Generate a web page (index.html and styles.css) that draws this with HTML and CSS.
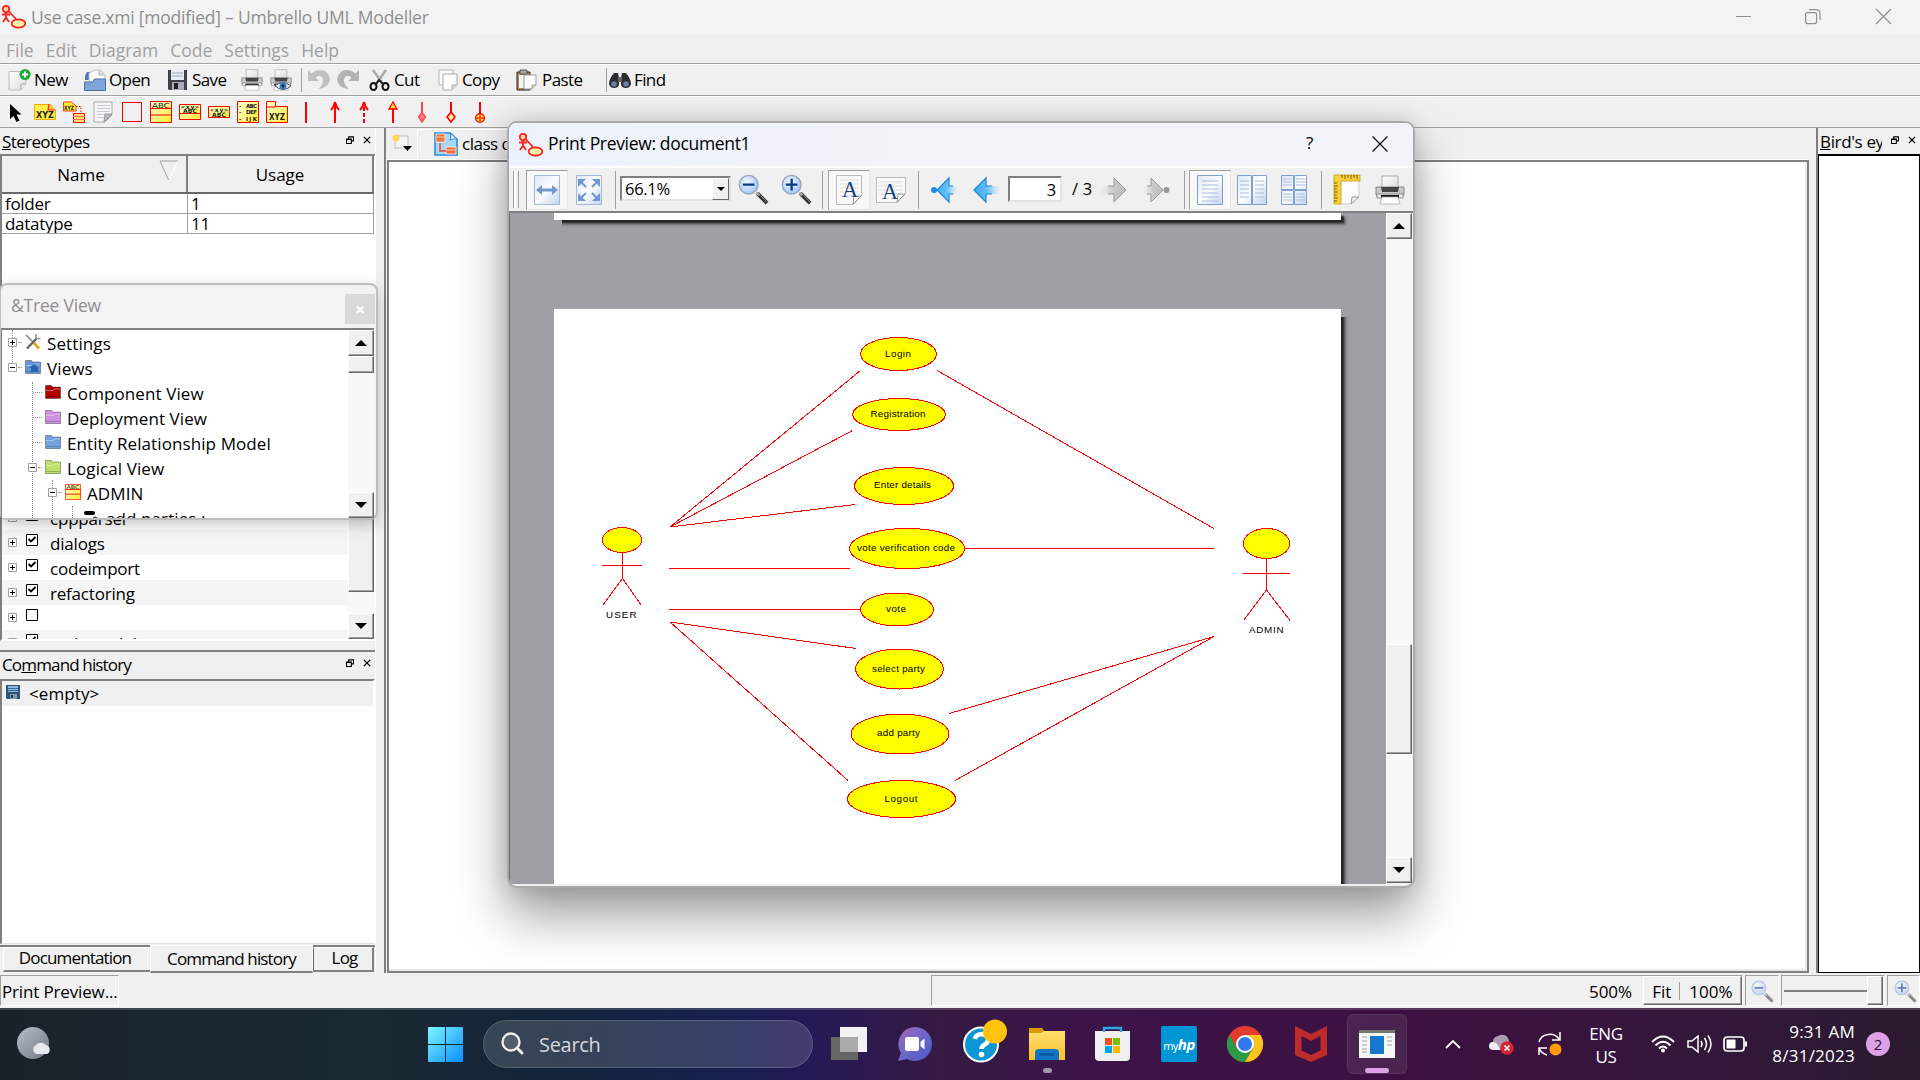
FILE: index.html
```html
<!DOCTYPE html>
<html lang="en">
<head>
<meta charset="utf-8">
<title>Umbrello UML Modeller</title>
<link rel="stylesheet" href="styles.css">
</head>
<body>
<svg class="defs" width="0" height="0">
  <defs>
    <linearGradient id="gYellow" x1="0" y1="0" x2="1" y2="1"><stop offset="0" stop-color="#ffffd0"/><stop offset=".5" stop-color="#fdf68a"/><stop offset="1" stop-color="#ffee20"/></linearGradient>
    <linearGradient id="gPage" x1="0" y1="0" x2="1" y2="1"><stop offset="0" stop-color="#fff"/><stop offset="1" stop-color="#dcdcdc"/></linearGradient>
    <linearGradient id="gBluePage" x1="0" y1="0" x2="1" y2="1"><stop offset="0" stop-color="#dfe6f2"/><stop offset=".5" stop-color="#fbfcfe"/><stop offset="1" stop-color="#c4d2ea"/></linearGradient>
    <linearGradient id="gArrow" x1="0" y1="0" x2="1" y2="0"><stop offset="0" stop-color="#39acf5"/><stop offset=".5" stop-color="#62bff9"/><stop offset="1" stop-color="#8fd2fb" stop-opacity="0"/></linearGradient>
    <linearGradient id="gArrowOff" x1="1" y1="0" x2="0" y2="0"><stop offset="0" stop-color="#bdbdbd"/><stop offset=".5" stop-color="#c9c9c9"/><stop offset="1" stop-color="#ddd" stop-opacity="0"/></linearGradient>
    <linearGradient id="gWin" x1="0" y1="0" x2="1" y2="1"><stop offset="0" stop-color="#7df6ff"/><stop offset="1" stop-color="#0a8cff"/></linearGradient>
    <linearGradient id="gChat" x1="0" y1="0" x2="1" y2="1"><stop offset="0" stop-color="#a666b0"/><stop offset=".5" stop-color="#6c68cc"/><stop offset="1" stop-color="#4d52c4"/></linearGradient>
    <linearGradient id="gFolder" x1="0" y1="0" x2="0" y2="1"><stop offset="0" stop-color="#ffe070"/><stop offset="1" stop-color="#fbc02a"/></linearGradient>
    <linearGradient id="gMoon" x1="0" y1="0" x2="1" y2="1"><stop offset="0" stop-color="#b4bfc9"/><stop offset="1" stop-color="#757a84"/></linearGradient>
    <radialGradient id="gLens" cx=".4" cy=".35" r=".7"><stop offset="0" stop-color="#f4f9ff"/><stop offset="1" stop-color="#9fc2f8"/></radialGradient>
    <symbol id="logo" viewBox="0 0 24 24">
      <g fill="none" stroke="#f7231f" stroke-width="1.8"><circle cx="4" cy="4" r="3.2" fill="#ffd9a0"/><path d="M4 7v6M0 9.500h8M4 12.500L1 17M4 12.500L7 17M6.500 6L14 14" /><ellipse cx="16.500" cy="18.500" rx="6.800" ry="4.200" fill="#fff3a8"/></g>
    </symbol>
    <symbol id="lens" viewBox="0 0 32 32">
      <path d="M20 20L30 30" stroke="#333" stroke-width="4"/><path d="M19 19L22 22" stroke="#aaa" stroke-width="2.500"/><path d="M23 22L30 29" stroke="#888" stroke-width="1"/>
      <circle cx="11" cy="11" r="9.600" fill="url(#gLens)" stroke="#9aa7bb" stroke-width="1.500"/><path d="M5 11h12" stroke="#0b3a80" stroke-width="2.400"/>
    </symbol>
    <symbol id="folder" viewBox="0 0 16 14">
      <path d="M.5 13.500V.5h6l1 1.500h8v11.500z" stroke="#0005" stroke-width="1"/><path d="M1 5.500h7l1-1.500h6" fill="none" stroke="#fff6"/><path d="M1 11.500h14" stroke="#0003"/>
    </symbol>
    <symbol id="float" viewBox="0 0 9 9"><path d="M3 3V.8h5.500V5.500H6.500M3 1.200h5.500M.6 8.400V3.500h5.400v4.900zM.6 4h5.400" fill="none" stroke="#000" stroke-width="1.200"/></symbol>
    <symbol id="cross" viewBox="0 0 9 9"><path d="M1 1l7 7M8 1L1 8" stroke="#000" stroke-width="1.500"/></symbol>
    <symbol id="plus" viewBox="0 0 9 9"><path d="M.5.5h8v8h-8z" fill="#fff" stroke="#a0a0a0"/><path d="M2 4.500h5M4.500 2v5" stroke="#000"/></symbol>
    <symbol id="minus" viewBox="0 0 9 9"><path d="M.5.5h8v8h-8z" fill="#fff" stroke="#a0a0a0"/><path d="M2 4.500h5" stroke="#000"/></symbol>
    <symbol id="checked" viewBox="0 0 12 12"><path d="M.5.5h11v11h-11z" fill="#fff" stroke="#000"/><path d="M2.500 5L5 7.500 9.500 3" fill="none" stroke="#000" stroke-width="1.800"/></symbol>
    <symbol id="unchecked" viewBox="0 0 12 12"><path d="M.5.5h11v11h-11z" fill="#fff" stroke="#000"/></symbol>
    <symbol id="classicon" viewBox="0 0 22 22"><path d="M.5.500h21v21h-21z" fill="url(#gYellow)" stroke="#f00"/><path d="M0 7.500h22M0 14h22" stroke="#f00" stroke-width="1.200"/><text x="2" y="6.500" font-size="7" textLength="18" lengthAdjust="spacingAndGlyphs" class="tiny">ABC</text></symbol>
    <symbol id="printer" viewBox="0 0 30 30"><path d="M7 1h16v12H7z" fill="url(#gPage)" stroke="#aaa"/><path d="M1 12h28v8H1z" fill="#c9c9c9" stroke="#888"/><path d="M6 12l1 5h16l1-5z" fill="#444"/><path d="M2 19h26v4H2z" fill="#eee" stroke="#777" stroke-width=".8"/><path d="M6 20h18v3H6z" fill="#111"/><path d="M7 22h16l2 7H5z" fill="#fff" stroke="#aaa" stroke-width=".8"/></symbol>
  </defs>
</svg>

<div class="app">
  <header class="titlebar">
    <svg class="logo"><use href="#logo"/></svg>
    <span class="title">Use case.xmi [modified] – Umbrello UML Modeller</span>
    <svg class="winbtns" width="156" height="20" viewBox="0 0 156 20" fill="none" stroke="#8f8f8f" stroke-width="1.200"><path d="M0 10.500h15M140 3l15 15M155 3l-15 15"/><rect x="69.600" y="6.600" width="11" height="11" rx="2"/><path d="M73 3.600h7.500a3.500 3.500 0 0 1 3.500 3.500V14"/></svg>
  </header>
  <nav class="menubar"><span>File</span><span>Edit</span><span>Diagram</span><span>Code</span><span>Settings</span><span>Help</span></nav>

  <div class="toolbar main-tools">
    <button class="tb new"><svg width="24" height="22"><path d="M1 2.500h17v12l-5 6.500H1z" fill="url(#gPage)" stroke="#bbb"/><path d="M13 21v-6h5" fill="#eee" stroke="#aaa"/><circle cx="17" cy="5.500" r="5.500" fill="#1faa35"/><path d="M17 2.500v6M14 5.500h6" stroke="#fff" stroke-width="2"/></svg>New</button>
    <button class="tb open"><svg width="22" height="22"><path d="M1 7l2-4h6v8H1z" fill="#4a78b8"/><path d="M5 13V4l6-3h5l5 5v8z" fill="#fafafa" stroke="#bbb"/><path d="M15 1v5h5" fill="#ddd" stroke="#bbb"/><path d="M.5 13h8l2-3h11v11.500H.5z" fill="#7da5d8" stroke="#4a75b0"/></svg>Open</button>
    <button class="tb save"><svg width="22" height="22"><path d="M1 1h19v20H2l-1-1z" fill="#3c4048"/><path d="M4 1h13v10H4z" fill="#e8eef8"/><path d="M5 4h11M5 7h11" stroke="#9ab"/><path d="M5 13h12v8H5z" fill="#aab"/><path d="M7 14h4v6H7z" fill="#222"/></svg>Save</button>
    <svg class="i-print" width="22" height="22"><use href="#printer"/></svg>
    <svg class="i-preview" width="22" height="22"><use href="#printer"/><path d="M5 17q7-7 16 0-8 7-16 0" fill="#e8eef5" stroke="#456"/><circle cx="13" cy="17" r="3.500" fill="#3a7cc4"/><circle cx="13" cy="17" r="1.400" fill="#123"/></svg>
    <i class="sep"></i>
    <svg class="i-undo" width="22" height="20" viewBox="0 0 22 20"><path d="M0 0v11h11L7.500 8q4-4.500 7 0 2 5-4 11Q21 18 22 9 20 0 12 0 7 0 3.500 3.500z" fill="#c0c0c0"/></svg>
    <svg class="i-redo" width="22" height="20" viewBox="0 0 22 20"><path d="M22 0v11H11l3.500-3q-4-4.500-7 0-2 5 4 11Q1 18 0 9 2 0 10 0q5 0 8.500 3.500z" fill="#b4b4b4"/></svg>
    <button class="tb cut"><svg width="21" height="22" fill="none"><path d="M4 1l10 14M17 1L7 15" stroke="#aaa" stroke-width="2.500"/><ellipse cx="4.500" cy="17.500" rx="3" ry="3.500" stroke="#111" stroke-width="2"/><ellipse cx="16.500" cy="17.500" rx="3" ry="3.500" stroke="#111" stroke-width="2"/><path d="M7 15l3-4 4 4" stroke="#222" stroke-width="2"/></svg>Cut</button>
    <button class="tb copy"><svg width="21" height="22"><path d="M1 1h14v15H1z" fill="#fafafa" stroke="#b5b5b5"/><path d="M5 5h14v11l-5 5H5z" fill="#fdfdfd" stroke="#aaa"/><path d="M14 21v-5h5" fill="#ddd" stroke="#aaa"/></svg>Copy</button>
    <button class="tb paste"><svg width="22" height="22"><path d="M1 3h13v18H1z" fill="#b58a55" stroke="#222"/><path d="M4 1h7v4H4z" fill="#aaa" stroke="#555"/><path d="M3 6h9v13H3z" fill="#f4f4f4"/><path d="M8 6h12v10l-4 4H8z" fill="#fdfdfd" stroke="#999"/><path d="M16 20v-4h4" fill="#ddd" stroke="#999"/></svg>Paste</button>
    <i class="sep"></i>
    <button class="tb find"><svg width="22" height="20"><path d="M5 3h4l1 5 0 7q-1 3-5 3t-5-4q0-5 5-11zM17 3h-4l-1 5v7q1 3 5 3t5-4q0-5-5-11z" fill="#2b2d33"/><path d="M9 7h4v5H9z" fill="#666"/><circle cx="5" cy="14" r="2.800" fill="#6b7fa5"/><circle cx="17" cy="14" r="2.800" fill="#6b7fa5"/></svg>Find</button>
  </div>

  <div class="toolbar shape-tools">
    <svg viewBox="0 0 22 22"><path d="M5 3v15l3.500-3 3 6 3-1.500-3-6h5z" fill="#000"/></svg>
    <svg viewBox="0 0 22 22"><path d="M.5 3.500h16L21.500 9v9.500H.5z" fill="#fff04a" stroke="#f7a800"/><path d="M15 3l-1 6h7" fill="#ffc93a" stroke="#f22" stroke-width="1.200"/><text x="2" y="17" font-size="9" font-weight="bold" textLength="18" lengthAdjust="spacingAndGlyphs" class="tiny">XYZ</text></svg>
    <svg viewBox="0 0 22 22"><path d="M.5 1h8L13 5v5H.5z" fill="#ffe83a" stroke="#f40"/><text x="1" y="8.500" font-size="6" font-weight="bold" class="tiny" textLength="10" lengthAdjust="spacingAndGlyphs">XYZ</text><path d="M13 5.500h5v7" fill="none" stroke="#f00" stroke-dasharray="1.500 1.500"/><path d="M10.500 12.500h11v9h-11z" fill="#ffe36a" stroke="#f00"/><path d="M10 15.500h12M10 18.500h12" stroke="#f66"/></svg>
    <svg viewBox="0 0 22 22"><path d="M2 1h18v13l-7 7H2z" fill="#f6f6f6" stroke="#aaa"/><path d="M5 4.500h13M5 7.500h13M5 10.500h13M5 13.500h9M5 16.500h7" stroke="#c3cbd6"/><path d="M12 21l1-8h7z" fill="#bbb" stroke="#999"/></svg>
    <svg viewBox="0 0 22 22"><path d="M1.500 1.500h19v19h-19z" fill="none" stroke="#f00"/></svg>
    <svg viewBox="0 0 22 22"><use href="#classicon"/></svg>
    <svg viewBox="0 0 22 22"><path d="M.5 3.500h21v15H.5zM0 12.500h22" fill="url(#gYellow)" stroke="#f00"/><text x="2" y="7.500" font-size="6" font-weight="bold" class="tiny" textLength="18">«xy»</text><text x="4" y="12" font-size="6" font-weight="bold" class="tiny" textLength="14">ABC</text></svg>
    <svg viewBox="0 0 22 22"><path d="M.5 5.500h21v11H.5z" fill="url(#gYellow)" stroke="#f00"/><text x="2" y="10.500" font-size="6" font-weight="bold" class="tiny" textLength="18">«xy»</text><text x="4" y="15.500" font-size="6" font-weight="bold" class="tiny" textLength="14">ABC</text></svg>
    <svg viewBox="0 0 22 22"><path d="M.5.500h21v21H.500z" fill="url(#gYellow)" stroke="#f00"/><g font-size="5.500" font-weight="bold"><text x="2" y="6.500" class="tiny">-</text><text x="9" y="6.500" class="tiny" textLength="11">ABC</text><text x="2" y="13" class="tiny">-</text><text x="9" y="13" class="tiny" textLength="11">DEF</text><text x="2" y="19.500" class="tiny">-</text><text x="9" y="19.500" class="tiny" textLength="11">IJK</text></g></svg>
    <svg viewBox="0 0 22 22"><path d="M.500.500h9v5h12v16H.500zM.5 6h9" fill="url(#gYellow)" stroke="#f00"/><text x="3" y="19" font-size="9" font-weight="bold" class="tiny" textLength="16" lengthAdjust="spacingAndGlyphs">XYZ</text></svg>
    <svg viewBox="0 0 22 22" class="line"><path d="M11 1v21"/></svg>
    <svg viewBox="0 0 22 22" class="line"><path d="M11 22V1M7 9q3-3 4-8 1 5 4 8"/></svg>
    <svg viewBox="0 0 22 22" class="line"><path d="M11 22V2" stroke-dasharray="4 2"/><path d="M7 9q3-3 4-8 1 5 4 8"/></svg>
    <svg viewBox="0 0 22 22" class="line"><path d="M11 22V7"/><path d="M7 8l4-7 4 7z" fill="#ffd83a" stroke-width="1.300"/></svg>
    <svg viewBox="0 0 22 22" class="line"><path d="M11 1v11" stroke="#f44"/><path d="M11 11l3.500 5-3.500 5-3.500-5z" fill="#f77" stroke="#f44" stroke-width="1.300"/></svg>
    <svg viewBox="0 0 22 22" class="line"><path d="M11 1v11"/><path d="M11 11l4 5-4 5-4-5z" fill="#ffe9a0" stroke-width="1.600"/></svg>
    <svg viewBox="0 0 22 22" class="line"><path d="M11 1v20"/><circle cx="11" cy="17" r="4.300" fill="#ffd83a" stroke-width="1.300"/><path d="M7 17h8M11 13v8" stroke-width="1"/></svg>
  </div>

  <main class="workspace">
    <aside class="left-dock">
      <div class="dock-head"><span class="w1"><u>S</u>tereotypes</span><svg class="dk"><use href="#float"/></svg><svg class="dk"><use href="#cross"/></svg></div>
      <div class="stereo">
        <div class="row head"><div>Name<svg class="sort" width="20" height="21"><path d="M19 1L10 20" stroke="#fff" fill="none"/><path d="M9.500 20L1 1h18" stroke="#a0a0a0" fill="none"/></svg></div><div>Usage</div></div>
        <div class="row"><div>folder</div><div>1</div></div>
        <div class="row"><div>datatype</div><div>11</div></div>
      </div>
      <div class="srclist">
        <div class="src-rows">
          <div class="src"><svg class="ex"><use href="#plus"/></svg><svg class="ck"><use href="#unchecked"/></svg><span>cppparser</span></div>
          <div class="src alt"><svg class="ex"><use href="#plus"/></svg><svg class="ck"><use href="#checked"/></svg><span>dialogs</span></div>
          <div class="src"><svg class="ex"><use href="#plus"/></svg><svg class="ck"><use href="#checked"/></svg><span>codeimport</span></div>
          <div class="src alt"><svg class="ex"><use href="#plus"/></svg><svg class="ck"><use href="#checked"/></svg><span>refactoring</span></div>
          <div class="src"><svg class="ex"><use href="#plus"/></svg><svg class="ck"><use href="#unchecked"/></svg></div>
          <div class="src alt"><svg class="ex"><use href="#plus"/></svg><svg class="ck"><use href="#checked"/></svg><span>codemodel</span></div>
        </div>
        <div class="scroll"><div class="thumb grow1"></div><div class="trough"></div><div class="sbtn"><i class="down"></i></div></div>
      </div>
      <div class="dock-head history"><span class="w2">Co<u>m</u>mand history</span><svg class="dk"><use href="#float"/></svg><svg class="dk"><use href="#cross"/></svg></div>
      <div class="hist-list"><div class="hist-row"><svg width="14" height="14"><path d="M0 0h14v14H1l-1-1z" fill="#2c5578"/><path d="M2 1h10v6H2z" fill="#8cbbe4"/><path d="M2 3.500h10M2 5.500h10" stroke="#3a6c98"/><path d="M4 9h7v5H4z" fill="#7d9ab0"/><path d="M5 10h2v3H5z" fill="#1f3c55"/></svg><span>&lt;empty&gt;</span></div></div>
      <div class="tabs"><span class="tab t-doc">Documentation</span><span class="tab t-cmd">Command history</span><span class="tab t-log">Log</span></div>
    </aside>

    <section class="center">
      <div class="tabbar">
        <svg width="22" height="20"><path d="M3 2h13v12H3z" fill="#f5f5f5" stroke="#bbb"/><circle cx="4" cy="4" r="3.500" fill="#f8d85a"/><path d="M11 12h9l-4.500 5z" fill="#000"/></svg>
        <div class="doc-tab"><svg width="24" height="24"><path d="M1 1h15l7 6v16H1z" fill="#a8d6f6" stroke="#2a8be0" stroke-width="1.600"/><path d="M2 2h9v8H2zM12 15h10v7H12z" fill="#f0733a" stroke="#fff" stroke-width=".7"/><path d="M6 11v8h6" fill="none" stroke="#e43" stroke-width="1.500"/><path d="M2 5h9M12 18h10" stroke="#fbc9a8"/><path d="M16 1q2 3 0 7 4-2 7-1z" fill="#fff" stroke="#2a8be0"/></svg>class diagram</div>
      </div>
      <div class="canvas"></div>
    </section>

    <aside class="right-dock">
      <div class="dock-head"><span class="bird"><u>B</u>ird's eye</span><svg class="dk"><use href="#float"/></svg><svg class="dk"><use href="#cross"/></svg></div>
      <div class="bird-view"></div>
    </aside>
  </main>

  <footer class="status">
    <div class="panel p-msg">Print Preview...</div>
    <div class="panel p-main"><span class="pct">500%</span><div class="fit"><span>Fit</span><i></i><span>100%</span></div></div>
    <div class="panel p-zoom"><svg class="faded" width="23" height="23" viewBox="0 0 32 32"><use href="#lens" width="32" height="32"/></svg></div>
    <div class="panel p-slider"><i class="rail"></i><i class="knob"></i></div>
    <div class="panel p-zoomin"><svg class="faded" width="23" height="23" viewBox="0 0 32 32"><use href="#lens" width="32" height="32"/><path d="M11 5v12" stroke="#0b3a80" stroke-width="2.400"/></svg></div>
  </footer>

  <section class="tree-win">
    <div class="tree-title"><span>&amp;Tree View</span><div class="tree-close">×</div></div>
    <div class="tree-body">
      <div class="tree">
        <i class="v v0"></i><i class="v v1"></i><i class="v v2"></i><i class="v v3"></i>
        <div class="node d0"><svg class="ex"><use href="#plus"/></svg><i class="h"></i><svg class="ic" viewBox="0 0 16 16"><path d="M8 8l6 6.500" stroke="#e3ad1f" stroke-width="3"/><path d="M1 1l8 8" stroke="#888" stroke-width="1.600"/><path d="M12 4L2 14.500" stroke="#666" stroke-width="2.400"/><path d="M11 0v4.500h4.500" fill="none" stroke="#999" stroke-width="1.600"/></svg><span>Settings</span></div>
        <div class="node d0"><svg class="ex"><use href="#minus"/></svg><i class="h"></i><svg class="ic" fill="#6398dc"><use href="#folder"/><path d="M4 9l5-4 5 4h-1v4H6V9z" fill="#2d62a8"/></svg><span>Views</span></div>
        <div class="node d1"><i class="h wide"></i><svg class="ic" fill="#b00000"><use href="#folder"/></svg><span>Component View</span></div>
        <div class="node d1"><i class="h wide"></i><svg class="ic" fill="#d092e0"><use href="#folder"/></svg><span>Deployment View</span></div>
        <div class="node d1"><i class="h wide"></i><svg class="ic" fill="#74a3e0"><use href="#folder"/></svg><span>Entity Relationship Model</span></div>
        <div class="node d1"><svg class="ex"><use href="#minus"/></svg><i class="h"></i><svg class="ic" fill="#bfe06a"><use href="#folder"/></svg><span>Logical View</span></div>
        <div class="node d2"><svg class="ex"><use href="#minus"/></svg><i class="h"></i><svg class="ic" viewBox="0 0 22 22"><use href="#classicon"/></svg><span>ADMIN</span></div>
        <div class="node d3"><svg class="ic" viewBox="0 0 16 16"><path d="M2 4h7" stroke="#000" stroke-width="4" stroke-linecap="round"/><circle cx="11" cy="10" r="2" fill="none" stroke="#000"/></svg><span>add parties :</span></div>
      </div>
      <div class="scroll"><div class="sbtn"><i class="up"></i></div><div class="thumb t16"></div><div class="trough"></div><div class="sbtn"><i class="down"></i></div></div>
    </div>
  </section>

  <section class="dialog">
    <div class="dlg-title">
      <svg class="logo"><use href="#logo"/></svg><span>Print Preview: document1</span>
      <b class="q">?</b><svg width="16" height="16"><path d="M.5.500l15 15M15.500.500l-15 15" stroke="#111" stroke-width="1.300"/></svg>
    </div>
    <div class="dlg-tools">
      <i class="grip"></i>
      <div class="tool on"><svg width="26" height="30"><path d="M.5.500h25v29H.500z" fill="url(#gBluePage)" stroke="#a3b9dc"/><path d="M6 15h14" stroke="#7297c8" stroke-width="3"/><path d="M2 15l6-5v10zM24 15l-6-5v10z" fill="#7297c8"/></svg></div>
      <div class="tool"><svg width="26" height="30"><path d="M.5.500h25v29H.500z" fill="url(#gBluePage)" stroke="#a3b9dc"/><g stroke="#7297c8" stroke-width="2"><path d="M5 7l5 5M21 7l-5 5M5 23l5-5M21 23l-5-5"/></g><path d="M2 4h8l-8 8zM24 4v8l-8-8zM2 26v-8l8 8zM24 26h-8l8-8z" fill="#7297c8"/></svg></div>
      <i class="sep"></i>
      <div class="combo"><span>66.1%</span><div><i class="down"></i></div></div>
      <svg class="z1" width="31" height="31"><use href="#lens"/></svg>
      <svg class="z2" width="31" height="31" viewBox="0 0 32 32"><use href="#lens" width="32" height="32"/><path d="M11 5v12" stroke="#0b3a80" stroke-width="2.400"/></svg>
      <i class="sep s2"></i>
      <div class="tool on"><svg width="26" height="30"><path d="M.5.500h25v20l-8 9H.500z" fill="#f8f8f8" stroke="#bbb"/><path d="M4 5h18M4 9h18M4 13h18M4 17h18M4 21h14" stroke="#ddd"/><path d="M17 29l1-8h7z" fill="#fff" stroke="#999"/><text x="6" y="22" font-size="24" textLength="16" lengthAdjust="spacingAndGlyphs" class="serif">A</text></svg></div>
      <div class="tool"><svg width="30" height="26"><path d="M.5.500h29v16l-8 9H.500z" fill="#f8f8f8" stroke="#bbb"/><path d="M3 5h24M3 9h24M3 13h24M3 17h22" stroke="#ddd"/><path d="M21 25l1-8h7z" fill="#fff" stroke="#999"/><text x="6" y="22" font-size="24" textLength="16" lengthAdjust="spacingAndGlyphs" class="serif">A</text></svg></div>
      <i class="sep s3"></i>
      <svg class="a1" width="28" height="28"><path d="M7 14L19 2v8h8v8h-8v8z" fill="url(#gArrow)"/><path d="M23 10h-4V2L7 14l12 12v-8h4" fill="none" stroke="#1d86d0" stroke-width="1.200"/><circle cx="4" cy="14" r="3" fill="#1f8ee0"/></svg>
      <svg class="a2" width="28" height="28"><path d="M1 14L13 2v8h14v8H13v8z" fill="url(#gArrow)"/><path d="M19 10h-6V2L1 14l12 12v-8h6" fill="none" stroke="#1d86d0" stroke-width="1.200"/></svg>
      <div class="pagenum">3</div><span class="total">/ 3</span>
      <svg class="a3" width="28" height="28"><path d="M27 14L15 2v8H1v8h14v8z" fill="url(#gArrowOff)"/><path d="M9 10h6V2l12 12-12 12v-8H9" fill="none" stroke="#9a9a9a"/></svg>
      <svg class="a4" width="28" height="28"><path d="M21 14L9 2v8H1v8h8v8z" fill="url(#gArrowOff)"/><path d="M5 10h4V2l12 12L9 26v-8H5" fill="none" stroke="#9a9a9a"/><circle cx="24.500" cy="14" r="3" fill="#999"/></svg>
      <i class="sep s4"></i>
      <div class="tool on"><svg width="26" height="30"><path d="M.5.500h25v29H.500z" fill="url(#gBluePage)" stroke="#7f9fd0"/><path d="M5 6h16M5 10h16M5 14h16M5 18h16M5 22h16M5 26h16" stroke="#a9bedf"/></svg></div>
      <div class="tool"><svg width="30" height="30"><path d="M.5.500h14v29H.500zM15.500.500h14v29h-14z" fill="url(#gBluePage)" stroke="#7f9fd0"/><path d="M3 6h9M3 10h9M3 14h9M3 18h9M3 22h9M18 6h9M18 10h9M18 14h9M18 18h9M18 22h9" stroke="#a9bedf"/></svg></div>
      <div class="tool"><svg width="26" height="30"><path d="M.5.500h12v14H.500zM13.500.500h12v14h-12zM.5 15.500h12v14H.500zM13.500 15.500h12v14h-12z" fill="url(#gBluePage)" stroke="#7f9fd0"/><path d="M2 4h9M2 7h9M2 10h9M15 4h9M15 7h9M15 10h9M2 19h9M2 22h9M2 25h9M15 19h9M15 22h9M15 25h9" stroke="#a9bedf"/></svg></div>
      <i class="sep s5"></i>
      <svg class="ru" width="26" height="30"><path d="M5 4h20v17l-8 8H5z" fill="#fcfcfa" stroke="#ccc"/><path d="M0 0h26v6H7v23H0z" fill="#f7d23c" stroke="#c79a10" stroke-width=".8"/><path d="M8 0v3M11 0v4M14 0v3M17 0v4M20 0v3M23 0v4M0 8h3M0 11h4M0 14h3M0 17h4M0 20h3M0 23h4M0 26h3" stroke="#6b4e00" stroke-width=".9"/><path d="M17 29l1-7h7z" fill="#eee" stroke="#999"/></svg>
      <svg class="pr" width="30" height="30"><use href="#printer"/></svg>
    </div>
    <div class="preview">
      <div class="paper-area">
        <div class="sheet prev"></div>
        <div class="sheet cur">
          <svg class="diagram" width="787" height="576" viewBox="554 309 787 576">
            <g class="ln" fill="none" stroke="#f00">
              <path d="M670 527L860.500 370.500M670 527L852.500 430.500M670 527L855 504.500M669 568.500H850M669 609.500H861M670 622L856 648.500M670 622L848 780.500M937 370.500L1214 528.500M965 548.500H1214M1214 636.500L949 713.500M1214 636.500L955 780.500"/>
              <path d="M622.500 552V579M602 565.500H642M622.500 578.500L602.500 605.500M622.500 578.500L641.500 605.500M1266.500 558V590M1243 573.500H1290M1266.500 590L1243.500 620.500M1266.500 590L1290 620.500"/>
            </g>
            <g class="ln" fill="#ff0" stroke="#f00">
              <ellipse cx="622" cy="540" rx="19.500" ry="12.500"/><ellipse cx="1266.500" cy="543.500" rx="23" ry="15"/>
              <ellipse cx="898.500" cy="354" rx="38" ry="16.500"/><ellipse cx="899" cy="414.500" rx="46.500" ry="16"/><ellipse cx="904" cy="486" rx="49.500" ry="18.500"/><ellipse cx="907" cy="548.500" rx="57.500" ry="20"/><ellipse cx="897" cy="609.500" rx="36.500" ry="16.500"/><ellipse cx="899.500" cy="669" rx="44" ry="20"/><ellipse cx="900" cy="734" rx="49" ry="20"/><ellipse cx="901.500" cy="799" rx="54" ry="18.500"/>
            </g>
            <g class="lbl">
              <text x="885" y="357" textLength="26">Login</text><text x="870.500" y="417" textLength="55">Registration</text><text x="874" y="488" textLength="57">Enter details</text><text x="857" y="551" textLength="98">vote verification code</text><text x="886" y="612" textLength="20">vote</text><text x="872" y="672" textLength="53">select party</text><text x="877" y="736" textLength="43">add party</text><text x="884.500" y="802" textLength="33">Logout</text><text x="606" y="618" textLength="30.500">USER</text><text x="1249" y="633" textLength="34.500">ADMIN</text>
            </g>
          </svg>
        </div>
      </div>
      <div class="scroll wide26"><div class="sbtn"><i class="up"></i></div><div class="trough t405"></div><div class="thumb t109"></div><div class="trough"></div><div class="sbtn"><i class="down"></i></div></div>
    </div>
  </section>
</div>

<div class="taskbar">
  <svg class="weather" width="36" height="36"><circle cx="16" cy="17" r="16" fill="url(#gMoon)"/><path d="M19 28a5 5 0 0 1 0-9 6.500 6.500 0 0 1 10 0 4.800 4.800 0 0 1 1 9z" fill="#e6e9ee"/></svg>
  <svg class="start" width="35" height="35" viewBox="0 0 35 35"><path d="M0 1q0-1 1-1h16v17H0zM18 0h16q1 0 1 1v16H18zM0 18h17v17H1q-1 0-1-1zM18 18h17v16q0 1-1 1H18z" fill="url(#gWin)"/></svg>
  <div class="search"><svg width="24" height="24"><circle cx="10" cy="10" r="8.500" fill="#fff2" stroke="#eee" stroke-width="2.400"/><path d="M16 16l5 5" stroke="#eee" stroke-width="3" stroke-linecap="round"/></svg><span>Search</span></div>
  <div class="apps">
    <div class="app-ic"><svg width="36" height="34"><path d="M0 10h27v23H0z" fill="#666"/><path d="M9 0h27v25H9z" fill="#f2f2f2"/><path d="M9 10h18v15H9z" fill="#aaa"/></svg></div>
    <div class="app-ic"><svg width="36" height="36"><path d="M18 1a17 17 0 1 1-8 32L1 35l3-8A17 17 0 0 1 18 1z" fill="url(#gChat)"/><rect x="8" y="11" width="14" height="14" rx="2" fill="#fff"/><path d="M23.500 16l4-3.500v11l-4-3.500z" fill="#fff"/></svg></div>
    <div class="app-ic"><svg width="46" height="46" viewBox="0 0 46 46"><circle cx="23" cy="25.500" r="17" fill="#0c96d6" stroke="#fff" stroke-width="2"/><path d="M17 20q1-5 7-5 6 1 6 6 0 3-4 5-2.500 1.500-2.500 4" fill="none" stroke="#fff" stroke-width="4.500"/><circle cx="23.500" cy="35.500" r="2.800" fill="#fff"/><circle cx="37" cy="12.500" r="12" fill="#ffc20e"/></svg></div>
    <div class="app-ic run"><svg width="36" height="34"><path d="M0 1h13l3 4-3 4H0z" fill="#dc9a00"/><path d="M0 6h12l3-2h21v29H0z" fill="url(#gFolder)"/><path d="M6 33v-7q0-4 4-4h16q4 0 4 4v7z" fill="#1173c8"/><path d="M10 27.500h15" stroke="#0a4f92" stroke-width="2"/></svg></div>
    <div class="app-ic"><svg width="36" height="36"><path d="M0 5h35v26q0 4-4 4H4q-4 0-4-4z" fill="#f0f0f0"/><path d="M9 6V2h17v4" fill="none" stroke="#28a8ea" stroke-width="2.400"/><path d="M10 12h7v7h-7z" fill="#f25022"/><path d="M18 12h7v7h-7z" fill="#7fba00"/><path d="M10 20h7v7h-7z" fill="#00a4ef"/><path d="M18 20h7v7h-7z" fill="#ffb900"/></svg></div>
    <div class="app-ic"><div class="hp">my<b>hp</b></div></div>
    <div class="app-ic"><svg width="36" height="36" viewBox="0 0 36 36"><circle cx="18" cy="18" r="18" fill="#e33b2e"/><path d="M2.400 9A18 18 0 0 0 18 36l8-13.500H10z" fill="#2a9b48"/><path d="M18 36A18 18 0 0 0 33.600 9H18l8 13.500z" fill="#fcc41f"/><circle cx="18" cy="18" r="9" fill="#fff"/><circle cx="18" cy="18" r="7" fill="#2f78ee"/></svg></div>
    <div class="app-ic"><svg width="32" height="36"><path d="M0 0l16 8L32 0v29l-16 7-16-7zM6.500 10v14.500L16 29l9.500-4.500V10L16 15z" fill="#bd2b2b" fill-rule="evenodd"/></svg></div>
    <div class="app-ic active"><svg width="36" height="28"><path d="M0 0h36v28H0z" fill="#f6f6f6"/><path d="M0 0h36v3H0z" fill="#77736f"/><path d="M11 6h14v18H11z" fill="#1279cf"/><path d="M3 7h5M3 11h5M3 15h5M3 19h5M28 7h5M28 11h5M28 15h5M3 22h5" stroke="#ccc" stroke-width="2"/></svg></div>
  </div>
  <div class="tray">
    <svg class="t-up" width="16" height="10"><path d="M1 9l7-7 7 7" fill="none" stroke="#fff" stroke-width="1.800"/></svg>
    <svg class="t-cloud" width="26" height="22"><path d="M4 17a4.500 4.500 0 0 1 0-8 6 6 0 0 1 5-6 7 7 0 0 1 11 5v9z" fill="#a99bb0"/><path d="M4 17a4 4 0 0 1 0-8q5 0 7 8z" fill="#f0edf2"/><circle cx="18" cy="15" r="6.700" fill="#d9232e"/><path d="M15.500 12.500l5 5M20.500 12.500l-5 5" stroke="#fff" stroke-width="1.600"/></svg>
    <svg class="t-sync" width="26" height="26" fill="none" stroke="#fff" stroke-width="1.500"><path d="M2 11A11 10 0 0 1 22 8M23 1v8h-8M10 24Q4 22 2 17M2 24v-7h8"/><circle cx="18.500" cy="18.500" r="6" fill="#ff9a0a" stroke="none"/></svg>
    <div class="lang">ENG<br>US</div>
    <svg class="t-wifi" width="24" height="18" fill="none" stroke="#fff" stroke-width="1.800"><path d="M1 7q11-11 22 0M4.500 10.500q7.500-7.500 15 0M8 13.500q4-4 8 0"/><circle cx="12" cy="15.500" r="2" fill="#fff" stroke="none"/></svg>
    <svg class="t-vol" width="26" height="20" fill="none" stroke="#fff" stroke-width="1.500"><path d="M1 7h4l6-5v16l-6-5H1zM14 7q2 3 0 6M17.500 4q4 6 0 12M21 1.500q6 8.500 0 17"/></svg>
    <svg class="t-bat" width="25" height="16"><rect x="1" y="1" width="20" height="14" rx="3" fill="none" stroke="#fff" stroke-width="1.700"/><path d="M3.500 3.500h9v9h-9zM22 5.500h2v5h-2z" fill="#fff"/></svg>
    <div class="clock">9:31 AM<br>8/31/2023</div>
    <div class="badge">2</div>
  </div>
</div>
</body>
</html>
```
FILE: styles.css
```css
* { box-sizing: border-box; }
html, body { margin: 0; width: 1920px; height: 1080px; overflow: hidden; }
body { font: 17px/20px "Open Sans", "Noto Sans", sans-serif; color: #000; background: #f0f0f0; letter-spacing: -0.3px; white-space: nowrap; display: flex; flex-direction: column; }
svg { display: block; flex: none; overflow: visible; }
.defs { position: absolute; }
.tiny { fill: #222; stroke: none; font-family: "DejaVu Sans", sans-serif; letter-spacing: 0; }
.serif { fill: #17427f; font-family: "Liberation Serif", serif; letter-spacing: 0; }
.app { position: relative; height: 1008px; display: flex; flex-direction: column; background: #f0f0f0; }
.logo { width: 24px; height: 24px; }

.titlebar { height: 34px; flex: none; background: #f3f3f3; display: flex; align-items: center; padding-left: 2px; color: #8f8f8f; }
.title { margin: -1px 0 0 5px; font-size: 17.500px; letter-spacing: -0.22px; }
.titlebar .winbtns { margin: -3px 28px 0 auto; }
.menubar { height: 30px; flex: none; display: flex; gap: 12px; padding: 6px 0 0 6px; color: #a0a0a0; border-bottom: 1px solid #a0a0a0; font-size: 17.500px; letter-spacing: 0; }
.toolbar { height: 32px; flex: none; border-top: 1px solid #fff; border-bottom: 1px solid #a0a0a0; display: flex; align-items: center; }
.tb { font: inherit; letter-spacing: inherit; color: #000; border: 0; background: none; padding: 0; display: flex; align-items: center; gap: 3px; position: static; }
.main-tools { font-size: 17px; padding-left: 8px; letter-spacing: -0.6px; }
.tb.new { width: 76px; gap: 2px; } .tb.open { width: 83px; } .tb.save { width: 74px; }
.i-preview { margin-left: 7px; }
.main-tools .sep { width: 2px; height: 24px; border-left: 1px solid #a0a0a0; margin-left: 9px; flex: none; }
.i-undo { margin-left: 5px; } .i-redo { margin-left: 7px; }
.tb.cut { margin-left: 10px; width: 69px; gap: 4px; } .tb.copy { width: 78px; } .tb.paste { width: 82px; gap: 4px; }
.main-tools .sep ~ .sep { margin-left: 8px; }
.tb.find { margin-left: 1px; }
.shape-tools { padding-left: 5px; gap: 7px; }
.shape-tools svg { width: 22px; height: 22px; }
.shape-tools .line { fill: none; stroke: #f00; stroke-width: 2; }

.workspace { height: 845px; flex: none; display: flex; }
.left-dock { width: 376px; border-right: 1px solid #fff; flex: none; display: flex; flex-direction: column; }
.dock-head { height: 26px; flex: none; display: flex; align-items: center; padding: 2px 4px 0 2px; }
.dock-head span { margin-right: auto; }
.w1 { letter-spacing: -0.62px; } .w2 { letter-spacing: -0.85px; }
.dk { width: 8px; height: 8px; margin: -4px 0 0 9px; }
.stereo { height: 150px; flex: none; background: #fff; border-top: 2px solid #808080; border-left: 2px solid #808080; }
.row { display: grid; grid-template-columns: 186px 186px; height: 20px; border-bottom: 1px solid #a0a0a0; line-height: 20px; width: 372px; }
.row > div { padding-left: 3px; border-right: 1px solid #a0a0a0; overflow: hidden; }
.row.head { height: 38px; background: #f0f0f0; border-bottom: 2px solid #696969; line-height: 38px; letter-spacing: 0; }
.row.head > div { display: flex; justify-content: center; align-items: center; border-right: 2px solid #808080; padding: 2px 0 0; }
.row.head > div:first-child { gap: 54px; padding-left: 48px; }
.sort { margin-top: -10px; }
.srclist { height: 337px; flex: none; display: flex; background: #fff; border: 2px solid #fff; border-right-width: 1px; border-left-color: #808080; align-items: stretch; }
.src-rows { flex: 1; padding-top: 199px; overflow: hidden; }
.src { height: 25px; display: flex; align-items: center; padding-left: 6px; letter-spacing: -0.2px; }
.src.alt { background: #f5f5f5; }
.src span { margin: 2px 0 0 12px; }
.ex { width: 9px; height: 9px; }
.ck { width: 12px; height: 12px; margin: -5px 0 0 9px; }
.scroll { width: 26px; flex: none; display: flex; flex-direction: column; }
.thumb, .sbtn { background: #f0f0f0; border: 1px solid; border-color: #fff #696969 #696969 #fff; box-shadow: inset -1px -1px #a0a0a0; flex: none; }
.sbtn { height: 26px; display: flex; align-items: center; justify-content: center; }
.up, .down { width: 0; height: 0; border: 6px solid transparent; border-top-width: 0; border-bottom: 6px solid #000; }
.down { border-bottom: 0; border-top: 6px solid #000; }
.trough { flex: 1; background: #f8f8f8; }
.grow1 { height: 286px; } .t16 { height: 17px; } .t109 { height: 110px; } .t405 { flex: 0 0 405px; }
.history { margin-top: 9px; height: 29px; border-top: 2px solid #808080; padding-top: 0; padding-bottom: 1px; }
.hist-list { height: 265px; flex: none; background: #fff; border: 2px solid #808080; border-right-color: #fff; border-bottom: 1px solid #e0e0e0; }
.hist-row { height: 25px; background: #f0f0f0; display: flex; align-items: center; padding-left: 4px; gap: 9px; letter-spacing: .1px; }
.hist-row svg { margin-top: -3px; }
.hist-row span { margin-top: 1px; }
.tabs { display: flex; margin-top: 1px; border-top: 2px solid #808080; height: 28px; }
.tab { text-align: center; letter-spacing: -0.85px; height: 25px; border: 1px solid #fff; border-bottom: 2px solid #808080; line-height: 20px; }
.t-doc { width: 147px; margin-left: 3px; border-right: 0; padding-right: 4px; }
.t-cmd { width: 163px; height: 28px; margin-top: -2px; line-height: 26px; background: #f0f0f0; }
.t-log { width: 61px; border-right: 2px solid #808080; border-left: 1px solid #696969; padding-left: 3px; }

.center { margin-left: 8px; width: 1425px; flex: none; border-left: 2px solid #808080; display: flex; flex-direction: column; }
.tabbar { height: 32px; flex: none; display: flex; padding: 6px 0 0 6px; border-bottom: 1px solid #fff; }
.doc-tab { display: flex; align-items: center; gap: 4px; border-left: 1px solid #fff; padding: 0 0 2px 16px; margin: -5px 0 0 3px; letter-spacing: -0.5px; border-top: 1px solid #fff; }
.canvas { height: 813px; margin-left: 1px; background: #fff; border: 2px solid #808080; box-shadow: inset -2px -2px #e8e8e8; }
.right-dock { margin-left: 7px; width: 104px; border-left: 2px solid #808080; }
.bird { width: 64px; overflow: hidden; letter-spacing: -0.35px; }
.bird-view { height: 819px; background: #fff; border: 1px solid #000; border-top: 2px solid #000; }

.status { height: 35px; display: flex; padding: 2px 0 2px; }
.panel { border: 1px solid; border-color: #a0a0a0 #fff #fff #a0a0a0; display: flex; align-items: center; }
.p-msg { width: 119px; padding: 2px 0 0 1px; letter-spacing: -0.15px; }
.p-main { margin-left: 812px; width: 813px; justify-content: flex-end; letter-spacing: 0; }
.pct { margin: 2px 11px 0 0; }
.fit { display: flex; align-items: center; width: 99px; height: 29px; padding-left: 8px; border: 1px solid; border-color: #fff #696969 #696969 #fff; box-shadow: inset -1px -1px #a0a0a0; }
.fit span { margin-top: 2px; }
.fit i { width: 1px; height: 18px; background: #a0a0a0; margin: 0 9px 0 8px; }
.p-zoom { margin-left: 2px; width: 34px; justify-content: center; }
.faded { opacity: .6; margin-top: 1px; }
.p-slider { margin-left: 2px; width: 104px; padding-left: 2px; }
.rail { width: 83px; height: 2px; background: #808080; }
.knob { width: 16px; height: 29px; border: 1px solid; border-color: #fff #696969 #696969 #fff; box-shadow: inset -1px -1px #a0a0a0; }
.p-zoomin { margin-left: 2px; width: 33px; padding-left: 6px; }

.tree-win { position: absolute; left: -1px; top: 283px; width: 379px; height: 237px; background: #f3f3f3; border: 2px solid #bdbdbd; border-radius: 8px; box-shadow: 0 5px 14px rgba(0,0,0,.22); display: flex; flex-direction: column; }
.tree-title { height: 43px; flex: none; display: flex; padding: 9px 1px 0 10px; color: #8f8f8f; justify-content: space-between; font-size: 17.500px; line-height: 22px; letter-spacing: -0.2px; }
.tree-close { width: 30px; height: 30px; background: #d9d9d9; color: #fff; text-align: center; line-height: 30px; font-size: 18px; font-weight: bold; }
.tree-body { display: flex; height: 190px; border-top: 2px solid #808080; border-left: 1px solid #808080; margin: 0 2px 0 0; background: #fff; }
.tree { flex: 1; position: relative; overflow: hidden; }
.v { position: absolute; width: 1px; border-left: 1px dotted #909090; }
.v0 { left: 10px; top: 0; height: 38px; } .v1 { left: 30px; top: 52px; bottom: 0; } .v2 { left: 50px; top: 150px; bottom: 0; } .v3 { left: 70px; top: 176px; bottom: 0; }
.node { height: 25px; display: flex; align-items: center; position: relative; }
.node span { margin: 2px 0 0 6px; letter-spacing: 0.1px; }
.node .ex { margin-right: 1px; }
.d0 { padding-left: 6px; } .d1 { padding-left: 26px; } .d2 { padding-left: 46px; } .d3 { padding-left: 82px; }
.h { width: 4px; border-top: 1px dotted #909090; margin-right: 3px; }
.h.wide { width: 9px; margin: 0 3px 0 5px; }
.ic { width: 16px; height: 16px; margin-top: -1px; }

.dialog { position: absolute; left: 507px; top: 121px; width: 908px; height: 767px; border: 2px solid #aaa; border-radius: 10px; background: #f0f0f0; box-shadow: 0 28px 50px rgba(0,0,0,.38), 0 0 22px rgba(0,0,0,.14); display: flex; flex-direction: column; overflow: hidden; }
.dlg-title { height: 43px; flex: none; background: linear-gradient(90deg, #ecf2fb, #f2f3f8 50%); display: flex; align-items: center; padding-left: 10px; }
.dlg-title span { margin: -3px 0 0 5px; font-size: 17.500px; letter-spacing: -0.33px; }
.q { margin: -4px 59px 0 auto; font-weight: normal; }
.dlg-title svg:last-child { margin: -1px 25px 0 0; }
.dlg-tools { height: 47px; flex: none; border-top: 2px solid #fff; border-bottom: 2px solid #808080; display: flex; align-items: center; padding-left: 4px; }
.grip { width: 6px; height: 37px; border: solid #a0a0a0; border-width: 0 1px; box-shadow: inset 2px 0 #fff; }
.tool { width: 42px; height: 40px; display: flex; align-items: center; justify-content: center; flex: none; }
.tool.on { background: #f8f8f8; border: 1px solid; border-color: #a0a0a0 #e6e6e6 #e6e6e6 #a0a0a0; }
.grip + .tool { margin-left: 7px; }
.dlg-tools .sep { width: 1px; height: 38px; background: #a0a0a0; margin-left: 5px; flex: none; }
.combo { margin: -2px 0 0 4px; width: 111px; height: 25px; background: #fff; border: 2px solid #808080; border-color: #808080 #e3e3e3 #e3e3e3 #808080; display: flex; padding-left: 3px; justify-content: space-between; line-height: 22px; letter-spacing: -0.3px; font-size: 16.500px; }
.combo div { width: 17px; height: 22px; background: #f0f0f0; display: flex; align-items: center; justify-content: center; border: 1px solid; border-color: #fff #696969 #696969 #fff; }
.combo .down { border-width: 4px 4px 0; }
.z1 { margin-left: 7px; } .z2 { margin-left: 12px; }
.dlg-tools .s2 { margin: 0 5px 0 10px; }
.dlg-tools .s3 { margin-left: 6px; }
.a1 { margin-left: 11px; } .a2 { margin-left: 15px; }
.pagenum { width: 54px; height: 26px; margin: -2px 0 0 7px; background: #fff; border: 2px solid; border-color: #808080 #e3e3e3 #e3e3e3 #808080; text-align: right; padding-right: 4px; line-height: 23px; font-size: 16.500px; }
.total { margin: -1px 0 0 10px; width: 21px; font-size: 16.500px; letter-spacing: .2px; }
.a3 { margin-left: 6px; } .a4 { margin-left: 15px; }
.dlg-tools .s4 { margin: 0 4px 0 14px; }
.dlg-tools .s5 { margin-left: 6px; }
.ru { margin-left: 12px; } .pr { margin-left: 15px; }
.preview { display: flex; height: 671px; flex: none; border-left: 1px solid #696969; }
.paper-area { width: 876px; background: #a09fa4; overflow: hidden; padding-left: 44px; height: 671px; }
.sheet { width: 787px; background: #fff; }
.sheet.prev { height: 7px; box-shadow: 3px 3px 2px #222, 5px 5px 3px #4448; clip-path: polygon(0 0, 800px 0, 800px 20px, 8px 20px, 8px 7px, 0 7px); }
.sheet.cur { height: 640px; margin-top: 89px; box-shadow: 3px 2px 2px #222, 5px 4px 3px #4448; clip-path: polygon(0 0, 787px 0, 787px 8px, 800px 8px, 800px 700px, 0 700px); }
.ln { shape-rendering: crispEdges; }
.lbl { font: 9.800px "Liberation Sans", Arial, sans-serif; letter-spacing: 0; fill: #000; }
.wide26 { height: 670px; }

.taskbar { height: 72px; flex: none; border-top: 2px solid #ffffff2a; background: linear-gradient(90deg, #1b2129 0, #192a31 19%, #13233b 30%, #17204f 38%, #231a56 42%, #2f1a4c 46%, #351a42 49%, #3c1448 56%, #3c1142 72%, #3b123e 78%, #32183a 90%, #2a1a2e 100%); background-clip: border-box; background-origin: border-box; display: flex; align-items: center; color: #fff; }
.weather { margin: -2px 0 0 17px; }
.start { margin: -2px 0 0 375px; }
.search { margin: -2px 0 0 20px; width: 330px; height: 48px; border-radius: 24px; background: #ffffff26; border: 1px solid #ffffff26; display: flex; align-items: center; gap: 14px; padding-left: 17px; font-size: 20px; color: #d6d6de; }
.search span { margin-top: 1px; }
.apps { display: flex; margin-left: 3px; }
.app-ic { width: 66px; height: 60px; display: flex; align-items: center; justify-content: center; margin-top: -2px; position: relative; }
.app-ic:nth-child(3) svg { margin-top: -5px; }
.run::after { content: ""; position: absolute; left: 29px; bottom: 1px; width: 9px; height: 5px; border-radius: 3px; background: #a493ad; }
.active { width: 60px; margin-left: 3px; background: #ffffff14; border: 1px solid #ffffff14; border-radius: 6px; }
.active::after { content: ""; position: absolute; left: 17px; bottom: 0; width: 24px; height: 5px; border-radius: 3px; background: #dda0e4; }
.hp { width: 36px; height: 36px; background: #0096d6; border-radius: 2px; font: 11px/36px "Open Sans", sans-serif; letter-spacing: -0.5px; text-align: center; }
.hp b { font-size: 15px; font-style: italic; }
.tray { flex: 1; display: flex; align-items: center; margin: -2px 0 0 38px; }
.t-cloud { margin-left: 28px; } .t-sync { margin-left: 22px; }
.lang { width: 40px; margin-left: 23px; text-align: center; line-height: 23px; margin-top: 1px; }
.t-wifi { margin-left: 25px; } .t-vol { margin-left: 12px; } .t-bat { margin-left: 10px; }
.clock { width: 107px; text-align: right; line-height: 24px; margin-top: 0; letter-spacing: .25px; }
.badge { width: 24px; height: 24px; border-radius: 50%; background: #dda0e4; color: #2a1230; text-align: center; line-height: 24px; font-size: 15px; margin-left: 11px; }
```
